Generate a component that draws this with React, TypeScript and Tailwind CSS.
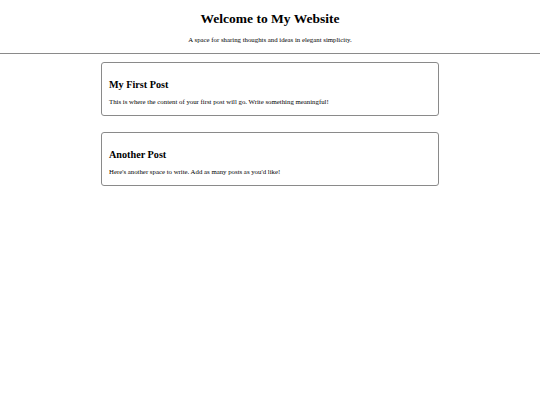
export default function App() {
  const posts = [
    {
      title: "My First Post",
      body: "This is where the content of your first post will go. Write something meaningful!",
    },
    {
      title: "Another Post",
      body: "Here's another space to write. Add as many posts as you'd like!",
    },
  ];

  return (
    <div className="min-h-screen bg-white text-black font-['Liberation_Serif',serif]">
      <header className="border-b border-[#8a8a8a] pt-[10px] pb-[9px] text-center">
        <h1 className="text-[13.5px] font-bold leading-[18px]">Welcome to My Website</h1>
        <p className="mt-[7px] text-[6.8px] leading-[9px]">
          A space for sharing thoughts and ideas in elegant simplicity.
        </p>
      </header>

      <main className="mx-auto mt-[8px] flex w-[338px] flex-col gap-[16px]">
        {posts.map((post) => (
          <article
            key={post.title}
            className="rounded-[3px] border border-[#8a8a8a] px-[7px] pt-[15px] pb-[8px]"
          >
            <h2 className="text-[10.2px] font-bold leading-[14px]">{post.title}</h2>
            <p className="mt-[5px] text-[6.8px] leading-[10px]">{post.body}</p>
          </article>
        ))}
      </main>
    </div>
  );
}
